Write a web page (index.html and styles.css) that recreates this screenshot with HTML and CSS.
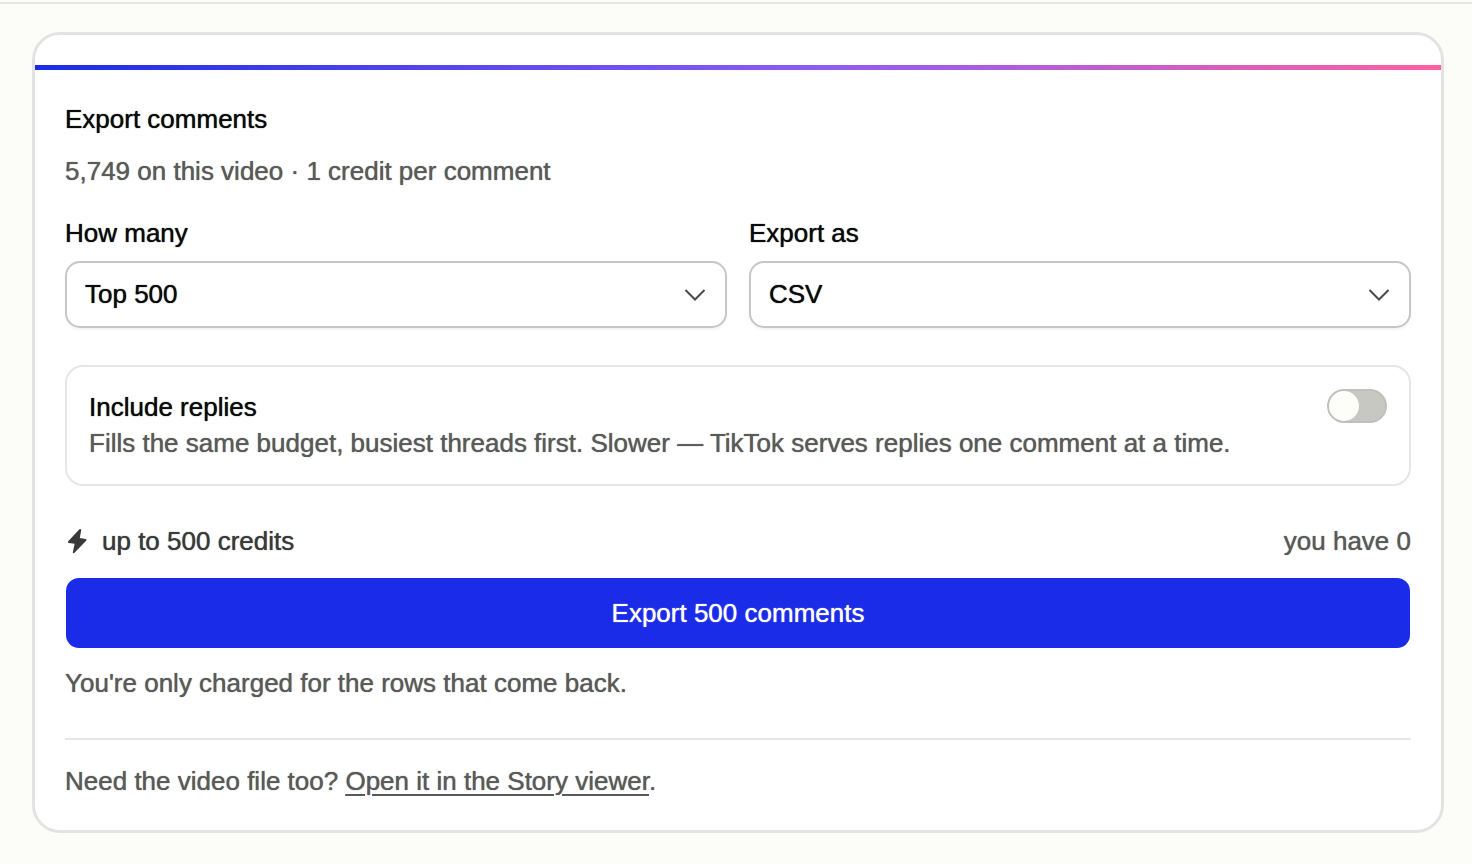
FILE: index.html
```html
<!DOCTYPE html>
<html lang="en">
<head>
    <meta charset="utf-8">
    <meta name="viewport" content="width=device-width, initial-scale=1">
    <title>Export comments</title>
    <link rel="stylesheet" href="styles.css">
</head>
<body>
    <main class="page">
        <section class="card">
            <div class="accent"></div>
            <form class="content">
                <h2 class="title">Export comments</h2>
                <p class="muted subtitle">5,749 on this video · 1 credit per comment</p>

                <div class="fields">
                    <div class="field">
                        <label for="amount">How many</label>
                        <div class="select-wrap">
                            <select id="amount" name="amount">
                                <option>Top 500</option>
                            </select>
                            <svg class="chevron" viewBox="0 0 22 12" aria-hidden="true"><path d="M1.5 1 L11 10.5 L20.5 1"/></svg>
                        </div>
                    </div>
                    <div class="field">
                        <label for="format">Export as</label>
                        <div class="select-wrap">
                            <select id="format" name="format">
                                <option>CSV</option>
                            </select>
                            <svg class="chevron" viewBox="0 0 22 12" aria-hidden="true"><path d="M1.5 1 L11 10.5 L20.5 1"/></svg>
                        </div>
                    </div>
                </div>

                <div class="replies">
                    <div>
                        <label for="replies">Include replies</label>
                        <p class="muted" id="repliesHint">Fills the same budget, busiest threads first. Slower — TikTok serves replies one comment at a time.</p>
                    </div>
                    <input class="switch" type="checkbox" role="switch" id="replies" name="replies" aria-describedby="repliesHint">
                </div>

                <div class="cost">
                    <span class="credits">
                        <svg class="bolt" viewBox="0 0 26 26" aria-hidden="true"><path d="M14.4 1.2 L3 13.5 Q2.4 14.7 3.8 14.9 L9.6 15.8 L7.8 24.6 Q8 25.7 9.2 25 L21.4 12.4 Q22 11.2 20.7 10.9 L14.8 10 L16.2 2 Q15.9 0.4 14.4 1.2 Z"/></svg>
                        up to 500 credits
                    </span>
                    <span class="muted">you have 0</span>
                </div>
                <button class="export" type="button">Export 500 comments</button>
                <p class="muted">You're only charged for the rows that come back.</p>

                <p class="muted footer">Need the video file too? <a href="#">Open it in the Story viewer</a>.</p>
            </form>
        </section>
    </main>
</body>
</html>
```
FILE: styles.css
```css
* {
    box-sizing: border-box;
}
body {
    margin: 0;
    padding-top: 2px;
    background-color: #fcfdf9;
    color: #0b0b0b;
    font-family: "Liberation Sans", Arial, sans-serif;
    font-size: 26px;
    line-height: 36px;
    text-shadow: 0 0 1px currentColor;
}
h2, p {
    margin: 0;
    font-size: 26px;
    font-weight: 500;
}
.page {
    border-top: 2px solid #e5e6e3;
    padding: 28px 28px 32px 32px;
}
.card {
    background-color: #fff;
    border: 3px solid #e3e4e2;
    border-radius: 28px;
    padding: 30px 0;
}
.accent {
    height: 5px;
    background: linear-gradient(90deg, #1a2ce8, #8b5cf6 55%, #ff5fa2);
}
.content {
    padding: 31px 30px 0;
}
.muted {
    color: #5a5a58;
}
.subtitle {
    margin: 16px 0 26px;
}
.fields {
    display: grid;
    grid-template-columns: 1fr 1fr;
    gap: 22px;
}
.field label {
    display: block;
    margin-bottom: 10px;
}
.select-wrap {
    position: relative;
}
select {
    appearance: none;
    display: block;
    width: 100%;
    height: 67px;
    padding: 0 60px 2px 18px;
    border: 2px solid #c7c7c5;
    border-radius: 15px;
    background-color: #fff;
    box-shadow: 0 2px 3px rgba(0, 0, 0, 0.05);
    color: inherit;
    font: inherit;
    text-shadow: inherit;
}
.chevron {
    position: absolute;
    right: 21px;
    top: 28px;
    width: 22px;
    height: 12px;
    fill: none;
    stroke: #4a4a49;
    stroke-width: 2;
    pointer-events: none;
}
.replies {
    display: flex;
    justify-content: space-between;
    align-items: flex-start;
    gap: 24px;
    margin: 37px 0 37px;
    padding: 22px 22px 23px;
    border: 2px solid #e6e6e4;
    border-radius: 18px;
}
.switch {
    appearance: none;
    flex: none;
    width: 60px;
    height: 34px;
    margin: 0;
    border: 2px solid #c0c1bb;
    border-radius: 17px;
    background-color: #c8c8c2;
}
.switch::before {
    content: "";
    display: block;
    width: 30px;
    height: 30px;
    border-radius: 50%;
    background-color: #fdfefa;
}
.switch:checked {
    background-color: #1a2ce8;
}
.switch:checked::before {
    margin-left: auto;
}
.cost {
    display: flex;
    justify-content: space-between;
    align-items: center;
}
.credits {
    display: flex;
    align-items: center;
    gap: 11px;
    color: #3a3a39;
    text-shadow: 0 0 1px currentColor;
}
.bolt {
    width: 26px;
    height: 26px;
    fill: #3a3a39;
}
.export {
    display: block;
    width: 100%;
    height: 72px;
    margin: 18px 0 16px;
    border: 1px solid transparent;
    border-radius: 14px;
    background-color: #1a2ce8;
    background-clip: padding-box;
    color: #fff;
    font: inherit;
    text-shadow: 0 0 1px #fff;
}
.footer {
    margin-top: 37px;
    padding-top: 23px;
    padding-bottom: 1px;
    border-top: 2px solid #e6e6e4;
}
.footer a {
    color: inherit;
    text-decoration-thickness: 2px;
    text-underline-offset: 4px;
}
```
